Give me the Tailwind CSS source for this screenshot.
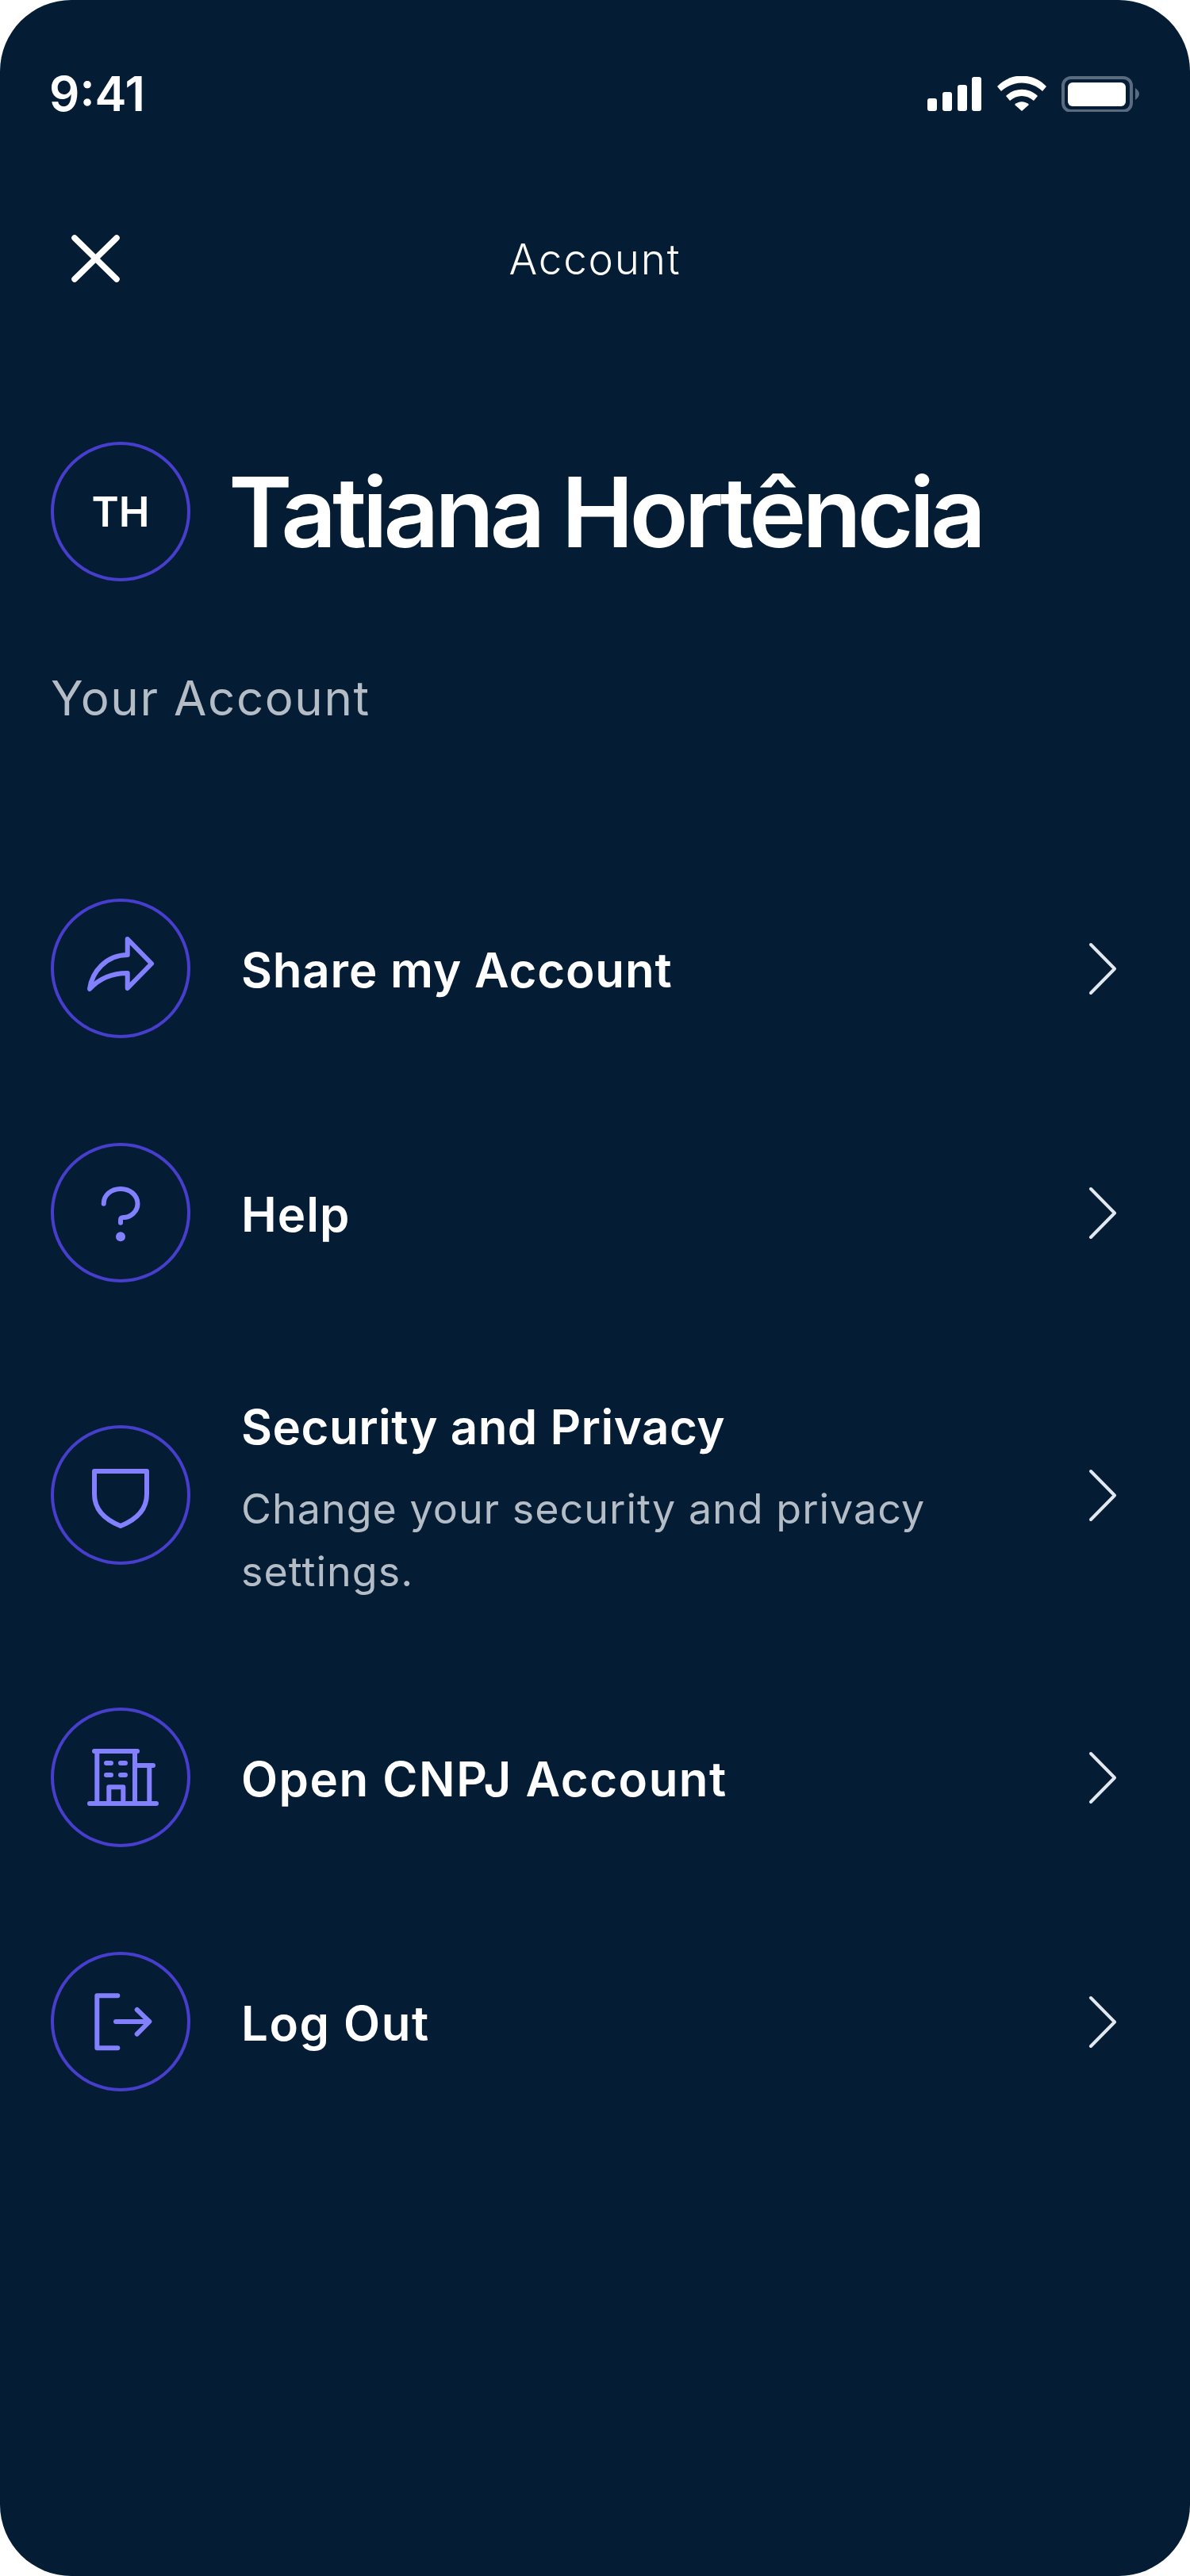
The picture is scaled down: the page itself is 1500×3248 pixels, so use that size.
<!DOCTYPE html>
<html lang="en">
<head>
    <meta charset="UTF-8">
    <title>Account</title>
    <script src="https://cdn.jsdelivr.net/npm/@tailwindcss/browser@4"></script>
</head>
<body class="bg-white">
    <div class="w-[1500px] h-[3248px] bg-[#051c35] rounded-[90px] overflow-hidden px-[64px] font-['Inter',sans-serif] text-white">
        <!-- Status bar -->
        <div class="pt-[96px] flex items-center justify-between h-[141px]">
            <span class="font-semibold text-[60px] leading-[45px] -ml-[2px]">9:41</span>
            <svg width="267" height="45" viewBox="1169 96 267 45" fill="none">
                <rect x="1169" y="124" width="12" height="16" rx="3" fill="#fff"/>
                <rect x="1188" y="116" width="12" height="24" rx="3" fill="#fff"/>
                <rect x="1207" y="107" width="12" height="33" rx="3" fill="#fff"/>
                <rect x="1225" y="97" width="12" height="43" rx="3" fill="#fff"/>
                <path d="M1257 109 C1274 91 1302 91 1319 109 L1314 115 C1299 101 1277 101 1262 115 Z" fill="#fff"/>
                <path d="M1268 121 C1279 110 1297 110 1308 121 L1303 127 C1294 119 1282 119 1273 127 Z" fill="#fff"/>
                <path d="M1279 132 C1284 127 1292 127 1297 132 L1288 140 Z" fill="#fff"/>
                <rect x="1340" y="98" width="86" height="42" rx="10" stroke="#5a6b80" stroke-width="4"/>
                <rect x="1346" y="104" width="73" height="30" rx="6" fill="#fff"/>
                <path d="M1431 111 C1434 113 1436 116 1436 118.500 C1436 121 1434 124 1431 126 Z" fill="#5a6b80"/>
            </svg>
        </div>

        <!-- Nav -->
        <div class="mt-[153px] grid grid-cols-3 items-center h-[62px]">
            <svg class="ml-[24px]" width="65" height="62" viewBox="0 0 65 62" fill="none" stroke="#fff" stroke-width="7.500" stroke-linecap="round">
                <path d="M6 5 L59 57 M59 5 L6 57"/>
            </svg>
            <span class="text-center text-[53px] leading-[62px] pt-[2px] font-light tracking-[1.800px]">Account</span>
        </div>

        <!-- Profile -->
        <div class="mt-[201px] flex items-center gap-[48px]">
            <div class="w-[176px] h-[176px] shrink-0 rounded-full border-4 border-[#483ecd] flex items-center justify-center text-[52px] pt-[2px] font-semibold">TH</div>
            <h1 class="text-[122px] leading-[150px] pt-[2px] font-semibold whitespace-nowrap tracking-[-5.300px]">Tatiana Hortência</h1>
        </div>

        <p class="mt-[107px] text-[60px] leading-[80px] text-[#b4bcc6] font-normal tracking-[1.600px]">Your Account</p>

        <!-- Menu -->
        <ul class="mt-[213px] flex flex-col gap-[132px]">
            <li class="flex items-center h-[176px]">
                <div class="w-[176px] h-[176px] shrink-0 rounded-full border-4 border-[#483ecd]">
                    <svg class="-m-[4px]" width="176" height="176" viewBox="0 0 176 176" fill="none" stroke="#8280ff" stroke-width="6" stroke-linecap="round" stroke-linejoin="round">
                        <path d="M96.700 51 L127 82 L96.700 113 V94 C75 94 60 102 49 114 C52 92 70 71 96.700 71 Z"/>
                    </svg>
                </div>
                <span class="ml-[64px] pt-[4px] flex-1 text-[60px] leading-[80px] font-semibold tracking-[0.800px]">Share my Account</span>
                <svg class="mr-[28px]" width="38" height="67" viewBox="0 0 38 67" fill="none" stroke="#e2e8f0" stroke-width="4" stroke-linecap="round" stroke-linejoin="round">
                    <path d="M5 3 L35 33.500 L5 64"/>
                </svg>
            </li>
            <li class="flex items-center h-[176px]">
                <div class="w-[176px] h-[176px] shrink-0 rounded-full border-4 border-[#483ecd]">
                    <svg class="-m-[4px]" width="176" height="176" viewBox="0 0 176 176" fill="none" stroke="#8280ff" stroke-width="6" stroke-linecap="round" stroke-linejoin="round">
                        <path d="M66.700 76.700 C66.700 66 76 58 88 58 C100 58 109.500 66 109.500 77 C109.500 87 100 94 92 94 C89 94 88 95 88 97 V100.700"/>
                        <circle cx="88" cy="118.300" r="6" fill="#8280ff" stroke="none"/>
                    </svg>
                </div>
                <span class="ml-[64px] pt-[4px] flex-1 text-[60px] leading-[80px] font-semibold tracking-[1px]">Help</span>
                <svg class="mr-[28px]" width="38" height="67" viewBox="0 0 38 67" fill="none" stroke="#e2e8f0" stroke-width="4" stroke-linecap="round" stroke-linejoin="round">
                    <path d="M5 3 L35 33.500 L5 64"/>
                </svg>
            </li>
            <li class="flex items-center h-[272px]">
                <div class="w-[176px] h-[176px] shrink-0 rounded-full border-4 border-[#483ecd]">
                    <svg class="-m-[4px]" width="176" height="176" viewBox="0 0 176 176" fill="none" stroke="#8280ff" stroke-width="6" stroke-linecap="round" stroke-linejoin="round">
                        <path d="M55 58 H121 V87 C121 106 108 119 88 127 C68 119 55 106 55 87 Z"/>
                    </svg>
                </div>
                <div class="ml-[64px] pt-[10px] flex-1">
                    <div class="text-[60px] leading-[80px] font-semibold tracking-[0.500px]">Security and Privacy</div>
                    <p class="mt-[24px] w-[900px] text-[52px] leading-[79px] text-[#b4bcc6] font-normal tracking-[1px]">Change your security and privacy settings.</p>
                </div>
                <svg class="mr-[28px]" width="38" height="67" viewBox="0 0 38 67" fill="none" stroke="#e2e8f0" stroke-width="4" stroke-linecap="round" stroke-linejoin="round">
                    <path d="M5 3 L35 33.500 L5 64"/>
                </svg>
            </li>
            <li class="flex items-center h-[176px]">
                <div class="w-[176px] h-[176px] shrink-0 rounded-full border-4 border-[#483ecd]">
                    <svg class="-m-[4px]" width="176" height="176" viewBox="0 0 176 176" fill="none" stroke="#8280ff" stroke-width="6" stroke-linecap="round" stroke-linejoin="round">
                        <path d="M55 55 H109 M58.300 55 V121 M106 55 V121 M106 73 H129 M124.300 73 V121 M49 121 H133 M70 70 H76 M88 70 H94 M70 85 H76 M88 85 H94 M73.300 121 V100.300 H91.300 V121"/>
                    </svg>
                </div>
                <span class="ml-[64px] pt-[4px] flex-1 text-[60px] leading-[80px] font-semibold tracking-[1.500px]">Open CNPJ Account</span>
                <svg class="mr-[28px]" width="38" height="67" viewBox="0 0 38 67" fill="none" stroke="#e2e8f0" stroke-width="4" stroke-linecap="round" stroke-linejoin="round">
                    <path d="M5 3 L35 33.500 L5 64"/>
                </svg>
            </li>
            <li class="flex items-center h-[176px]">
                <div class="w-[176px] h-[176px] shrink-0 rounded-full border-4 border-[#483ecd]">
                    <svg class="-m-[4px]" width="176" height="176" viewBox="0 0 176 176" fill="none" stroke="#8280ff" stroke-width="6" stroke-linecap="round" stroke-linejoin="round">
                        <path d="M84.300 55.300 H58.300 V121.300 H84.300 M82 88 H124 M108.700 73 L124.300 88 L108.700 103.700"/>
                    </svg>
                </div>
                <span class="ml-[64px] pt-[4px] flex-1 text-[60px] leading-[80px] font-semibold tracking-[1.500px]">Log Out</span>
                <svg class="mr-[28px]" width="38" height="67" viewBox="0 0 38 67" fill="none" stroke="#e2e8f0" stroke-width="4" stroke-linecap="round" stroke-linejoin="round">
                    <path d="M5 3 L35 33.500 L5 64"/>
                </svg>
            </li>
        </ul>
    </div>
</body>
</html>
